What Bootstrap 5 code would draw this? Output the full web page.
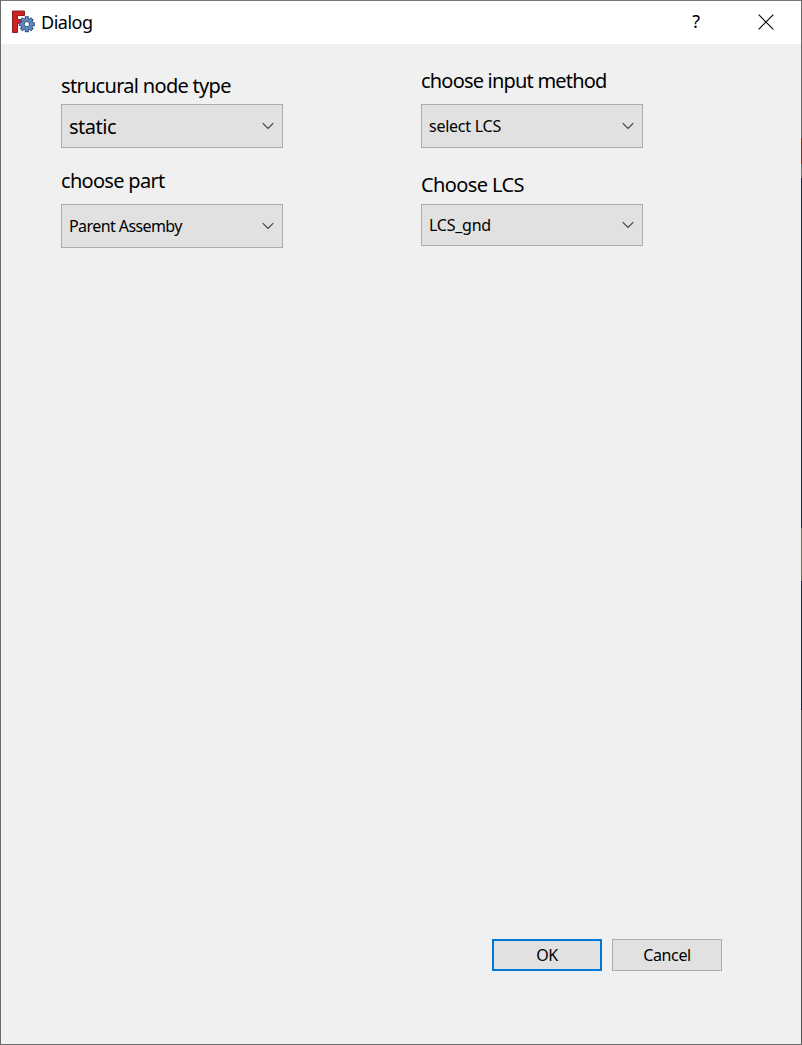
<!DOCTYPE html>
<html lang="en">
<head>
<meta charset="utf-8">
<meta name="viewport" content="width=device-width, initial-scale=1">
<title>Dialog</title>
<link href="https://cdn.jsdelivr.net/npm/bootstrap@5.3.0/dist/css/bootstrap.min.css" rel="stylesheet">
<style>
body{background:#f0f0f0;color:#000;font-family:"Noto Sans",sans-serif;font-size:16px;line-height:24px}
.window{height:1045px;border:1px solid #6b6b6b;border-top:0}
.edge{right:-1px;top:0;width:1px;height:1044px;background:linear-gradient(#6b6b6b 138px,#8c2a20 138px 164px,#707070 164px 178px,#20243a 178px 528px,#6c7066 528px 581px,#20243a 581px 710px,#555 710px)}
.titlebar{height:44px;background:#fff;padding:0 27px 2px 10px;border-top:1px solid #777}
.caption{font-size:18px;margin-left:6px;letter-spacing:-.5px;padding-top:1px}
.help{font-size:18px;margin-right:58px;margin-top:-2px}
.fields{padding:24px 0 0 60px;display:grid;grid-template-columns:222px 222px;column-gap:138px;row-gap:16px}
.field-label{font-size:20px;line-height:28px;height:36px;white-space:nowrap;letter-spacing:-.7px}
.label-type{padding-top:4px}
.label-method{line-height:26px;letter-spacing:-.8px}
.label-part{height:40px;padding-top:3px}
.label-lcs{height:40px;padding-top:7px;letter-spacing:-.6px}
.combo{height:44px;background:#e1e1e1;border:1px solid #adadad;padding:0 8px 0 7px;letter-spacing:-.25px}
.combo.short{height:42px}
.combo.large{font-size:20px;letter-spacing:-.5px;padding-top:1px}
.combo.tight{letter-spacing:-.58px}
.combo svg{width:12px;height:8px;flex:none}
.large svg{margin-top:-1px}
.dlg-btn{width:110px;height:32px;background:#e1e1e1;border:1px solid #adadad;border-radius:0;padding:0;font-size:16px;line-height:24px;color:#000;letter-spacing:-.35px}
.dlg-btn.default{border:2px solid #0078d7}
.actions{padding:0 79px 73px 0;gap:10px}
</style>
</head>
<body>
<svg class="d-none"><symbol id="chevron" viewBox="0 0 12 8"><path d="M.7 1.200 6 6.500l5.300-5.300" fill="none" stroke="#444" stroke-width="1.200"/></symbol></svg>
<main class="window d-flex flex-column position-relative">
<header class="titlebar d-flex align-items-center">
<svg width="24" height="24" viewBox="0 0 24 24"><path d="M1.500 1h12v4.500H6.500v4h5v4h-5v9h-5z" fill="#d02024" stroke="#8a2022"/><g transform="translate(15.800 14.200)"><g fill="#2c4872"><path id="cog" d="M-2-8h4v16h-4z"/><use href="#cog" transform="rotate(45)"/><use href="#cog" transform="rotate(90)"/><use href="#cog" transform="rotate(135)"/><circle r="6.200"/></g><g fill="#5c88bf"><path id="tooth" d="M-1.200-7.200h2.400v14.400h-2.400z"/><use href="#tooth" transform="rotate(45)"/><use href="#tooth" transform="rotate(90)"/><use href="#tooth" transform="rotate(135)"/><circle r="5.500"/></g><circle r="2.700" fill="#fff" stroke="#2c4872"/></g></svg>
<span class="caption me-auto">Dialog</span>
<span class="help">?</span>
<svg width="16" height="16" viewBox="0 0 16 16"><path d="M.7.7l14.600 14.600M15.300.7L.7 15.300" stroke="#000" stroke-width="1.100"/></svg>
</header>
<section class="fields">
<div><div class="field-label label-type">strucural node type</div><div class="combo large d-flex align-items-center justify-content-between"><span>static</span><svg><use href="#chevron"/></svg></div></div>
<div><div class="field-label label-method">choose input method</div><div class="combo d-flex align-items-center justify-content-between"><span>select LCS</span><svg><use href="#chevron"/></svg></div></div>
<div><div class="field-label label-part">choose part</div><div class="combo tight d-flex align-items-center justify-content-between"><span>Parent Assemby</span><svg><use href="#chevron"/></svg></div></div>
<div><div class="field-label label-lcs">Choose LCS</div><div class="combo short d-flex align-items-center justify-content-between"><span>LCS_gnd</span><svg><use href="#chevron"/></svg></div></div>
</section>
<footer class="actions d-flex justify-content-end mt-auto"><button class="btn dlg-btn default">OK</button><button class="btn dlg-btn">Cancel</button></footer>
<div class="edge position-absolute"></div>
</main>
<script src="https://cdn.jsdelivr.net/npm/bootstrap@5.3.0/dist/js/bootstrap.bundle.min.js"></script>
</body>
</html>
